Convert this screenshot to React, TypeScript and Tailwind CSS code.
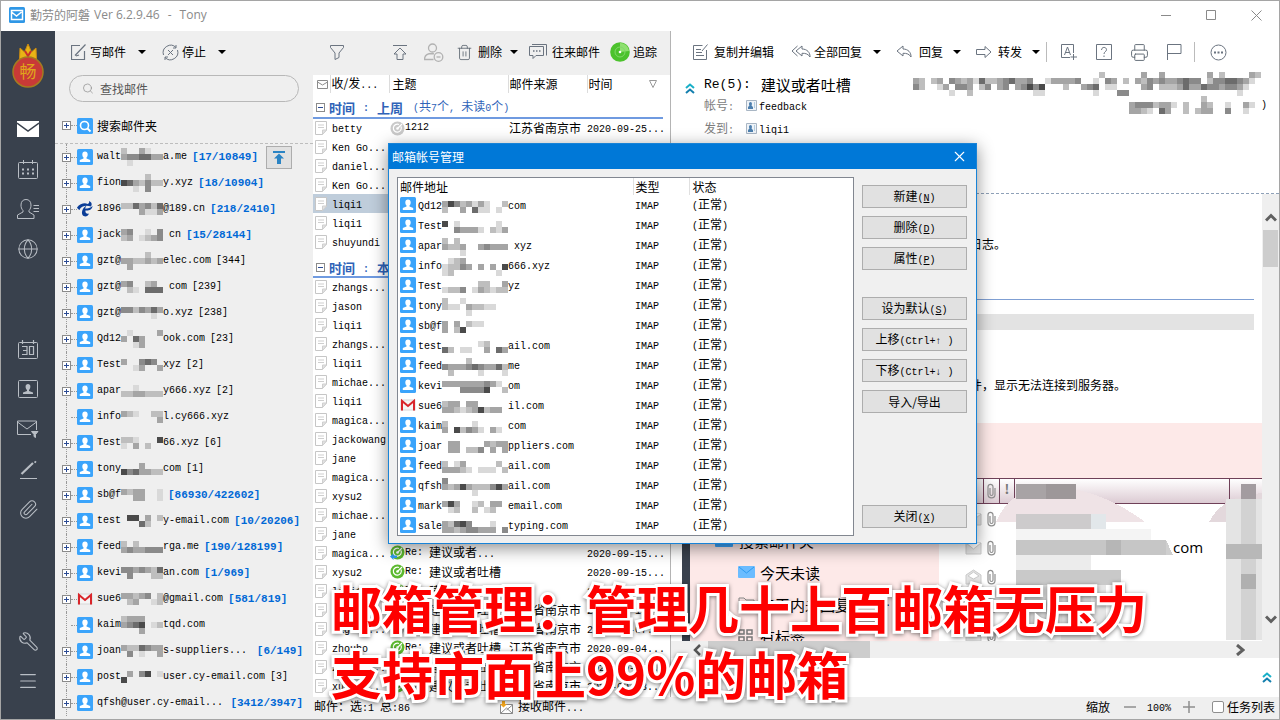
import type { ReactNode } from 'react';
import {
  Globe,
  Menu,
  Paperclip,
  Printer,
  Search,
  Trash2,
  Wrench,
  X,
} from 'lucide-react';

const accounts = [
  { head: 'walt', tail: 'a.me', mosaic: ['2..31..', '3445533', '.1.....'], count: '[17/10849]', unread: true, upload: true },
  { head: 'fion', tail: 'y.xyz', mosaic: ['....2..', '6532422', '..1.4..'], count: '[18/10904]', unread: true },
  { head: '1896', tail: '@189.cn', mosaic: ['2253425', '...3113'], count: '[218/2410]', unread: true, icon: 'telecom' },
  { head: 'jack', tail: ' cn', mosaic: ['34..1.4', '23.1234'], count: '[15/28144]', unread: true },
  { head: 'gzt@', tail: 'elec.com', mosaic: ['....2..', '3322323', '.3.....'], count: '[344]' },
  { head: 'gzt@', tail: ' com', mosaic: ['34..23.', '.21.555'], count: '[239]' },
  { head: 'gzt@', tail: 'o.xyz', mosaic: ['4424353', '.....1.'], count: '[238]' },
  { head: 'Qd12', tail: 'ook.com', mosaic: ['.1....3', '3.53...', '..13...'], count: '[23]' },
  { head: 'Test', tail: 'xyz', mosaic: ['3..454.', '..13..3'], count: '[2]' },
  { head: 'apar', tail: 'y666.xyz', mosaic: ['..1....', '2233222'], count: '[2]' },
  { head: 'info', tail: 'l.cy666.xyz', mosaic: ['321..22', '......3'], leaf: true },
  { head: 'Test', tail: '66.xyz', mosaic: ['221...6', '1.3.2..'], count: '[6]' },
  { head: 'tony', tail: 'com', mosaic: ['...3...', '6453322'], count: '[1]' },
  { head: 'sb@f', tail: '', mosaic: ['3233..1', '..33..1'], count: '[86930/422602]', unread: true },
  { head: 'test', tail: 'y-email.com', mosaic: ['.66.3.2', '...52..'], count: '[10/20206]', unread: true },
  { head: 'feed', tail: 'rga.me', mosaic: ['2.2....', '3433444'], count: '[190/128199]', unread: true },
  { head: 'kevi', tail: 'an.com', mosaic: ['4434325', '.4...22'], count: '[1/969]', unread: true },
  { head: 'sue6', tail: '@gmail.com', mosaic: ['33234.2', '.23..12'], count: '[581/819]', unread: true, icon: 'gmail' },
  { head: 'kaim', tail: 'tqd.com', mosaic: ['2333...', '3456.12', '...3...'], leaf: true },
  { head: 'joan', tail: 's-suppliers...', mosaic: ['3225433', '.4.1..3'], count: '[6/149]', unread: true, right: true },
  { head: 'post', tail: 'user.cy-email.com', mosaic: ['.3.46.1', '6......'], count: '[3]' },
  { head: 'qfsh@user.cy-email...', tail: '', count: '[3412/3947]', unread: true, right: true },
];

const mailboxes = [
  { head: 'Qd12', tail: 'com', mosaic: ['36423131..2', '2..3.511.1.'] },
  { head: 'Test', tail: '', mosaic: ['6.1......1.', '..43331.213'] },
  { head: 'apar', tail: ' xyz', mosaic: ['2.2........', '3223..34333', '...1.......'] },
  { head: 'info', tail: '666.xyz', mosaic: ['.123.......', '12243.3.3.6', '12.......1.'] },
  { head: 'Test', tail: 'yz', mosaic: ['......22..3', '1224.132122'] },
  { head: 'tony', tail: '', mosaic: ['2..1.......', '211.32211..', '....1.....'] },
  { head: 'sb@f', tail: '', mosaic: ['3.3.211....', '3.26.......'] },
  { head: 'test', tail: 'ail.com', mosaic: ['......12...', '52.11..3.53'] },
  { head: 'feed', tail: 'me', mosaic: ['....2......', '43334543352', '.2....1...1'] },
  { head: 'kevi', tail: 'om', mosaic: ['3333333431.', '...44446..2'] },
  { head: 'sue6', tail: 'il.com', mosaic: ['233.33.....', '3321236233.'], icon: 'gmail' },
  { head: 'kaim', tail: 'com', mosaic: ['2....1.....', '3.62431.31.'] },
  { head: 'joar', tail: 'ppliers.com', mosaic: ['.33....3233', '.33.224.3.3'] },
  { head: 'feed', tail: 'ail.com', mosaic: ['2.13.....2.', '33321.111.2'] },
  { head: 'qfsh', tail: 'ail.com', mosaic: ['4..........', '32363222463', '.....1.....'] },
  { head: 'mark', tail: 'email.com', mosaic: ['363..12.33.', '.12..2.12..'] },
  { head: 'sale', tail: 'typing.com', mosaic: ['32564...1..', '332344333.4'] },
];

type MailRow = {
  from: string;
  subject?: string;
  more?: boolean;
  source?: boolean;
  date?: string;
  icon?: string;
  selected?: boolean;
};

const lastWeek: MailRow[] = [
  { from: 'betty', subject: '1212', source: true, date: '2020-09-25...', icon: 'gray' },
  { from: 'Ken Go...' },
  { from: 'daniel...' },
  { from: 'Ken Go...' },
  { from: 'liqi1', selected: true },
  { from: 'liqi1' },
  { from: 'shuyundi' },
];

const thisMonth: MailRow[] = [
  { from: 'zhangs...' },
  { from: 'jason' },
  { from: 'liqi1' },
  { from: 'zhangs...' },
  { from: 'liqi1' },
  { from: 'michae...' },
  { from: 'liqi1' },
  { from: 'magica...' },
  { from: 'jackowang' },
  { from: 'jane' },
  { from: 'magica...' },
  { from: 'xysu2' },
  { from: 'michae...' },
  { from: 'jane' },
  { from: 'magica...', subject: 'Re:', more: true, date: '2020-09-15...', icon: 'replied' },
  { from: 'xysu2', subject: 'Re:', date: '2020-09-15...', icon: 'green' },
  { from: 'liqi1', subject: 'Re:', date: '2020-09-14...', icon: 'green' },
  { from: 'jane', subject: 'Re:', source: true, date: '2020-09-10...', icon: 'green' },
  { from: 'magica...', subject: 'Re:', source: true, date: '2020-09-07...', icon: 'gray' },
  { from: 'zhoubo', subject: 'Re:', source: true, date: '2020-09-04...', icon: 'green' },
  { from: 'zhangs...', subject: 'Re:', source: true, date: '2020-09-04...', icon: 'green' },
  { from: 'xuwei...', subject: 'Re:', source: true, date: '2020-09-03...', icon: 'green' },
];

const shades = ['#ffffff', '#d9d9d9', '#bebebe', '#a5a5a5', '#8a8a8a', '#6c6c6c', '#4a4a4a'];

const Mosaic = ({ rows, cell = 6 }: { rows: string[]; cell?: number }) => {
  const cols = Math.max(...rows.map((r) => r.length));
  return (
    <svg
      width={cols * cell}
      height={rows.length * cell}
      shapeRendering="crispEdges"
      className="shrink-0"
      aria-hidden="true"
    >
      {rows.flatMap((row, y) =>
        [...row].map((c, x) =>
          c === '.' ? null : (
            <rect key={`${x}-${y}`} x={x * cell} y={y * cell} width={cell} height={cell} fill={shades[Number(c)]} />
          ),
        ),
      )}
    </svg>
  );
};

const Latin = ({ children }: { children: ReactNode }) => (
  <span className="font-['Liberation_Mono',monospace] text-[10px] whitespace-pre">{children}</span>
);

const Caret = () => (
  <svg width="8" height="4" className="shrink-0">
    <path d="M0 0h8L4 4z" fill="#000" />
  </svg>
);

const AccountIcon = ({ kind }: { kind?: string }) => {
  if (kind === 'gmail') {
    return (
      <svg width="16" height="16" viewBox="0 0 16 16" className="shrink-0">
        <rect x="1" y="3" width="14" height="10" fill="#f5f5f5" stroke="#d8d8d8" />
        <path d="M2 13.500V4l6 5 6-5v9.500" fill="none" stroke="#d9252a" strokeWidth="2" />
      </svg>
    );
  }
  if (kind === 'telecom') {
    return (
      <svg width="16" height="16" viewBox="0 0 16 16" className="shrink-0" fill="#0b3d97">
        <path d="M0 6.500C3 2.500 8 1.500 10.500 3C12 2.500 12.500 1.500 12 0C14.500 1 15.500 3 14 5.500C10 4 4 4.500 2.500 9C1.500 8.500.5 7.500 0 6.500z" />
        <path d="M9.500 4.500C5.500 7 4 11 5.500 14C7.500 16.500 11 15.500 12 12.500C9.500 13.500 8 11.500 8.500 9.500C11.500 10 15.500 8.500 15.500 5C13.500 7 11 7.500 8 7.500C8.500 6.500 9 5.500 9.500 4.500z" />
      </svg>
    );
  }
  return (
    <svg width="16" height="16" viewBox="0 0 16 16" className="shrink-0">
      <rect width="16" height="16" rx="1.500" fill="#3ba4fb" />
      <path d="M8 2.500c1.700 0 2.700 1.200 2.700 2.900 0 1.500-.7 2.500-1.200 3v1.100l3.700 1.600v1.900H2.800v-1.900l3.700-1.600V8.400c-.5-.5-1.200-1.500-1.200-3 0-1.700 1-2.900 2.700-2.900z" fill="#fff" />
    </svg>
  );
};

const ExpandBox = ({ open }: { open?: boolean }) => (
  <svg width="9" height="9" className="shrink-0">
    <rect x=".5" y=".5" width="8" height="8" fill="#fff" stroke="#8b8b8b" />
    <path d={open ? 'M2 4.500h5' : 'M2 4.500h5M4.500 2v5'} stroke="#2b4b94" />
  </svg>
);

const NoteIcon = () => (
  <svg width="12" height="14" viewBox="0 0 12 14" className="shrink-0">
    <path d="M.5.500h11v8.500l-4 4.500h-7z" fill="#fff" stroke="#c6c6c6" />
    <path d="M11.500 9h-4v4.500z" fill="#e2e2e2" stroke="#cfcfcf" />
    <path d="M3 4h6M3 6.500h6" stroke="#cfcfcf" />
  </svg>
);

const RadarIcon = ({ kind }: { kind?: string }) => (
  <svg width="15" height="15" viewBox="0 0 15 15" className="shrink-0">
    <circle cx="7.500" cy="7.500" r="7" fill={kind === 'gray' ? '#c9c9c9' : '#5cb92f'} />
    <path d="M11 5.500a4 4 0 1 1-2-2M7.500 7.500L12 3" fill="none" stroke="#fff" strokeWidth="1.200" />
    <circle cx="7.500" cy="7.500" r="1.300" fill="#fff" />
    {kind === 'replied' && <path d="M0 11.500L3.500 8.500v2H7v2.500H3.500v2z" fill="#2f9bf0" />}
  </svg>
);

const ReplyIcon = ({ all }: { all?: boolean }) => (
  <svg width={all ? 20 : 16} height="14" viewBox={all ? '-4 0 20 14' : '0 0 16 14'} className="shrink-0" fill="#fff" stroke="#6b7480">
    {all && <path d="M2.500 1L-3 6l5.500 5" fill="none" />}
    <path d="M7 1L1 6l6 5V8.300c3.500-.2 6.500.8 8 3.700.3-4.500-3-8-8-8z" />
  </svg>
);

const DoubleChevron = () => (
  <svg width="10" height="11" viewBox="0 0 10 11" fill="none" strokeWidth="2" className="shrink-0">
    <path d="M1 5l4-3.500L9 5" stroke="#19b0c8" />
    <path d="M1 10l4-3.500L9 10" stroke="#147fae" />
  </svg>
);

const Envelope = ({ open }: { open?: boolean }) => (
  <svg width="17" height="16" viewBox="0 0 17 16" className="shrink-0" fill="#e3e3e3" stroke="#c9c9c9">
    {open ? <path d="M1 6l7.500-5L16 6v9H1z" /> : <path d="M1 3h15v11H1z" />}
    <path d={open ? 'M3 7l5.500-4L14 7l-5.500 3z' : 'M1 3l7.500 6L16 3'} fill="#fff" />
  </svg>
);

const ClipIcon = () => (
  <svg width="9" height="16" viewBox="0 0 9 16" fill="none" stroke="#8f8f8f" strokeWidth="1.200" className="shrink-0">
    <path d="M3 5v6c0 2 3 2 3 0V4C6 .5 1 .5 1 4v7.500c0 4.500 7 4.500 7 0V5" />
  </svg>
);

const SidebarButton = ({ label, children }: { label: string; children: ReactNode }) => (
  <button aria-label={label} className="flex h-10 w-full items-center justify-center text-[#b9bec5]">
    {children}
  </button>
);

const Sidebar = () => (
  <nav className="flex w-[54px] shrink-0 flex-col bg-[#39414d]">
    <div className="flex h-[78px] items-center justify-center pb-2">
      <svg width="34" height="46" viewBox="0 0 34 46">
        <path d="M8.500 16L9 5l4.500 4L17 1l3.500 8L25 5l.5 11z" fill="#e9b416" stroke="#c98a12" />
        <path d="M14 8l3 5 3-5" fill="none" stroke="#c8302c" strokeWidth="2" />
        <circle cx="17" cy="29" r="15" fill="#c83a37" stroke="#a57b20" strokeWidth="1.500" />
        <text x="17" y="35" textAnchor="middle" fontSize="17" fill="#e0a51b" fontFamily="'Noto Sans CJK SC', sans-serif">
          畅
        </text>
      </svg>
    </div>
    <SidebarButton label="邮件">
      <svg width="22" height="16" viewBox="0 0 22 16">
        <path d="M0 0h22v16H0z" fill="#fff" />
        <path d="M0 2l11 8 11-8" fill="none" stroke="#39414d" strokeWidth="1.500" />
      </svg>
    </SidebarButton>
    <SidebarButton label="日程">
      <svg width="20" height="19" viewBox="0 0 20 19" fill="none" stroke="currentColor">
        <rect x=".5" y="2.500" width="19" height="16" rx="1" />
        <path d="M5.500 0v4M14.500 0v4" />
        <path d="M4 9.500h2M9 9.500h2M14 9.500h2M4 13.500h2M9 13.500h2M14 13.500h2" strokeWidth="2" />
      </svg>
    </SidebarButton>
    <SidebarButton label="联系人">
      <svg width="22" height="20" viewBox="0 0 22 20" fill="none" stroke="currentColor">
        <path d="M6 11.500C4.500 10 4 8 4 6c0-3.500 2-5.500 5-5.500S14 2.500 14 6c0 2-.5 4-2 5.500v1.500l5 3v3.500H.5V16l5.500-3z" />
        <path d="M16.500 6.500H22M16.500 9.500H22M16.500 12.500H22" />
      </svg>
    </SidebarButton>
    <SidebarButton label="网络">
      <Globe size={22} strokeWidth={1.1} />
    </SidebarButton>
    <div className="h-[60px]" />
    <SidebarButton label="日历">
      <svg width="20" height="19" viewBox="0 0 20 19" fill="none" stroke="currentColor">
        <rect x=".5" y="2.500" width="19" height="16" rx="1" />
        <path d="M4.500 0v4M15.500 0v4M4 6.500h5v8H4M5 10.500h4M11.500 6.500h4v8h-4z" strokeWidth="1.200" />
      </svg>
    </SidebarButton>
    <SidebarButton label="名片">
      <svg width="20" height="18" viewBox="0 0 20 18">
        <rect x=".5" y=".5" width="19" height="17" rx="1" fill="none" stroke="currentColor" />
        <path d="M10 4c3 0 3 4 1 6v1l4 1.500V14H5v-1.500L9 11v-1C7 8 7 4 10 4z" fill="currentColor" />
      </svg>
    </SidebarButton>
    <SidebarButton label="过滤邮件">
      <svg width="22" height="18" viewBox="0 0 22 18" fill="none" stroke="currentColor">
        <path d="M14 14.500H.5V1h19v9M.5 2l9.500 7 9.500-7" />
        <path d="M14.500 11.500h6.500l-2.500 3v3l-1.500-1v-2z" fill="currentColor" />
      </svg>
    </SidebarButton>
    <SidebarButton label="签名">
      <svg width="19" height="19" viewBox="0 0 19 19" fill="none" stroke="currentColor">
        <path d="M2.500 14L14 3" strokeWidth="2.200" />
        <path d="M15.500 1.500l1.500 1" strokeWidth="2" />
        <path d="M1 18.500h17" />
      </svg>
    </SidebarButton>
    <SidebarButton label="附件">
      <Paperclip size={21} strokeWidth={1.2} />
    </SidebarButton>
    <div className="flex-1" />
    <SidebarButton label="设置">
      <Wrench size={21} strokeWidth={1.2} className="-scale-x-100" />
    </SidebarButton>
    <SidebarButton label="菜单">
      <Menu size={22} strokeWidth={1.2} />
    </SidebarButton>
    <div className="h-[18px]" />
  </nav>
);

const FolderTree = () => (
  <section className="flex w-[258px] shrink-0 flex-col">
    <div className="flex h-11 shrink-0 items-center pb-0.5 pl-4">
      <button className="flex items-center gap-1">
        <svg width="15" height="16" viewBox="0 0 15 16" fill="none" stroke="#6b7480">
          <path d="M9 1.500H.5v14h13V7M4 11.500L14.500.5M5 12l3-1" strokeWidth="1.200" />
        </svg>
        写邮件
      </button>
      <div className="w-3" />
      <Caret />
      <button className="ml-4 flex items-center gap-[3px]">
        <svg width="17" height="17" viewBox="0 0 17 17" fill="none" stroke="#6b7480">
          <path d="M1.500 11A7.500 7.500 0 0 1 14 3.500M15.500 6A7.500 7.500 0 0 1 3 13.500M14 1v3h-3M3 16v-3h3M6 6l5 5M11 6l-5 5" />
        </svg>
        停止
      </button>
      <div className="w-3" />
      <Caret />
    </div>
    <label className="mx-[14px] flex h-[27px] shrink-0 items-center gap-1.5 rounded-full border border-[#b8b8b8] pl-3">
      <Search size={13} strokeWidth={1.5} className="text-[#909090]" />
      <input
        aria-label="查找邮件"
        placeholder="查找邮件"
        className="w-full bg-transparent text-[12px] outline-none placeholder:text-[#555]"
      />
    </label>
    <div className="flex h-[42px] shrink-0 items-center border-b border-dashed border-[#bdbdbd] pt-1.5 pl-[7px]">
      <ExpandBox />
      <span className="w-1.5 border-t border-dotted border-[#999]" />
      <svg width="16" height="16" viewBox="0 0 16 16">
        <rect width="16" height="16" rx="1.500" fill="#3ba4fb" />
        <circle cx="7.500" cy="7.500" r="4" fill="none" stroke="#fff" strokeWidth="1.600" />
        <path d="M10.500 10.500l3 3" stroke="#fff" strokeWidth="1.800" />
      </svg>
      <span className="ml-1">搜索邮件夹</span>
    </div>
    <ul className="min-h-0 flex-1 overflow-hidden">
      {accounts.map((a, i) => (
        <li key={i} className="relative flex h-[26px] items-center pr-[10px] pl-[7px] leading-none whitespace-nowrap">
          <span className="absolute inset-y-0 left-[11px] border-l border-dotted border-[#999]" />
          <span className="relative flex w-[15px] items-center">
            {a.leaf ? <span className="w-[9px]" /> : <ExpandBox />}
            <span className="flex-1 border-t border-dotted border-[#999]" />
          </span>
          <AccountIcon kind={a.icon} />
          <span className="ml-1 flex items-center">
            <Latin>{a.head}</Latin>
            {a.mosaic && <Mosaic rows={a.mosaic} />}
            <Latin>{a.tail}</Latin>
          </span>
          {a.count && (
            <span
              className={
                a.unread
                  ? `font-['Liberation_Mono',monospace] text-[11px] font-bold text-[#0068d6] ${a.right ? 'ml-auto' : 'ml-[5px]'}`
                  : "ml-[5px] font-['Liberation_Mono',monospace] text-[10px]"
              }
            >
              {a.count}
            </span>
          )}
          {a.upload && (
            <button aria-label="置顶" className="mr-[11px] ml-auto flex h-[23px] w-[26px] items-center justify-center border border-[#adadad] bg-[#e1e1e1]">
              <svg width="12" height="13" viewBox="0 0 12 13">
                <path d="M0 0h12v2H0zM6 2.500l5 5H8V13H4V7.500H1z" fill="#2b84c4" />
              </svg>
            </button>
          )}
        </li>
      ))}
    </ul>
  </section>
);

const MailLine = ({ row }: { row: MailRow }) => (
  <tr className={row.selected ? 'bg-[#bfcddb]' : ''}>
    <td className="h-[19px] p-0 pl-[2px]"><NoteIcon /></td>
    <td className="p-0 pl-[2px]"><Latin>{row.from}</Latin></td>
    <td className="overflow-hidden p-0 pl-px">
      {row.subject && (
        <div className="flex items-center">
          <RadarIcon kind={row.icon} />
          <Latin>{row.subject}</Latin>
          {row.subject === 'Re:' && (
            <span className="ml-1.5">{row.more ? <>建议或者<Latin>...</Latin></> : '建议或者吐槽'}</span>
          )}
        </div>
      )}
    </td>
    <td className="p-0 pl-px">{row.source && '江苏省南京市'}</td>
    <td className="p-0"><Latin>{row.date}</Latin></td>
  </tr>
);

const MailList = () => (
  <section className="flex w-[357px] shrink-0 flex-col">
    <div className="flex h-11 shrink-0 items-center pb-0.5 pl-[17px]">
      <button aria-label="筛选">
        <svg width="14" height="15" viewBox="0 0 14 15" fill="none" stroke="#6b7480">
          <path d="M.5.500h13v2L9 8v4.500L5 14.500V8L.5 2.500z" />
        </svg>
      </button>
      <button aria-label="上移" className="ml-[49px]">
        <svg width="14" height="15" viewBox="0 0 14 15" fill="none" stroke="#6b7480">
          <path d="M0 .5h14M7 3L1 9h3v5.500h6V9h3z" />
        </svg>
      </button>
      <button aria-label="移除联系人" className="ml-[17px]">
        <svg width="20" height="19" viewBox="0 0 20 19" fill="none" stroke="#b2b2b2" strokeWidth="1.300">
          <circle cx="8.500" cy="5" r="4" />
          <path d="M9.500 16.500H.5C.5 13 3 10.500 8 10.500l2 .3" />
          <circle cx="14.500" cy="14" r="4.300" />
          <path d="M12.500 14h4" />
        </svg>
      </button>
      <button className="ml-3 flex items-center gap-[5px]">
        <Trash2 size={17} strokeWidth={1.2} className="text-[#5f6873]" />
        删除
      </button>
      <div className="w-2" />
      <Caret />
      <button className="ml-[11px] flex items-center gap-[5px]">
        <svg width="18" height="16" viewBox="0 0 18 16" fill="none" stroke="#6b7480">
          <path d="M3 .5h14.500v11M.5 2.500h14v9H7l-3 3v-3H.5z" />
          <path d="M4 7h1.500M7 7h1.500M10 7h1.500" strokeWidth="1.600" />
        </svg>
        往来邮件
      </button>
      <button className="ml-2.5 flex items-center gap-[3px]">
        <svg width="20" height="20" viewBox="0 0 20 20">
          <circle cx="10" cy="10" r="9.800" fill="#4cc22d" />
          <path d="M10 10V1a9 9 0 0 1 9 8z" fill="#8fe070" />
          <circle cx="10" cy="10" r="5" fill="none" stroke="#7fd968" />
          <circle cx="10" cy="10" r="1.300" fill="#fff" />
        </svg>
        追踪
      </button>
    </div>
    <div className="min-h-0 flex-1 overflow-hidden bg-white">
      <table className="w-[350px] table-fixed border-collapse text-left leading-none whitespace-nowrap">
        <colgroup>
          <col className="w-[17px]" />
          <col className="w-[59px]" />
          <col className="w-[119px]" />
          <col className="w-[79px]" />
          <col className="w-[76px]" />
        </colgroup>
        <thead>
          <tr>
            <th className="h-[18px] border-r border-[#dcdcdc] p-0 pl-1">
              <svg width="11" height="9" viewBox="0 0 11 9" fill="none" stroke="#8c8c8c">
                <path d="M.5.500h10v8H.5zM.5 2l5 3 5-3" />
              </svg>
            </th>
            <th className="border-r border-[#dcdcdc] p-0 pl-px font-normal">收/发<Latin>...</Latin></th>
            <th className="border-r border-[#dcdcdc] p-0 pl-[3px] font-normal">主题</th>
            <th className="border-r border-[#dcdcdc] p-0 pl-px font-normal">邮件来源</th>
            <th className="p-0 pl-px font-normal">
              <span className="flex items-center justify-between pr-1.5">
                时间
                <svg width="8" height="8" viewBox="0 0 8 8" fill="none" stroke="#999">
                  <path d="M.5.500h7L4 7.500z" />
                </svg>
              </span>
            </th>
          </tr>
        </thead>
        <tbody>
          <tr>
            <td colSpan={5} className="h-[25px] border-b-2 border-[#6f9ae0] p-0 pt-1 pl-[3px] text-[#2f63b8]">
              <div className="flex items-center">
                <ExpandBox open />
                <b className="ml-1 text-[13px]">时间</b>
                <b className="ml-2"><Latin>:</Latin></b>
                <b className="ml-2 text-[13px]">上周</b>
                <span className="ml-2.5"><Latin>(</Latin>共<Latin>7</Latin>个<Latin>, </Latin>未读<Latin>0</Latin>个<Latin>)</Latin></span>
              </div>
            </td>
          </tr>
          {lastWeek.map((row, i) => (
            <MailLine key={i} row={row} />
          ))}
          <tr>
            <td colSpan={5} className="h-[26px] border-b-2 border-[#6f9ae0] p-0 pt-2 pl-[3px] text-[#2f63b8]">
              <div className="flex items-center">
                <ExpandBox open />
                <b className="ml-1 text-[13px]">时间</b>
                <b className="ml-2"><Latin>:</Latin></b>
                <b className="ml-2 text-[13px]">本月</b>
              </div>
            </td>
          </tr>
          {thisMonth.map((row, i) => (
            <MailLine key={i} row={row} />
          ))}
        </tbody>
      </table>
    </div>
  </section>
);

const ContactBadge = () => (
  <svg width="11" height="11" viewBox="0 0 11 11">
    <path d="M.5.500h10v10H.5z" fill="#eef3f8" stroke="#a9b6c4" />
    <path d="M4.500 2c2 0 1.500 3 1 3.500L7 7v2H2V7l1.500-1.500C3 5 2.500 2 4.500 2z" fill="#4d7fae" />
    <path d="M8.500 2.500v6" stroke="#7aa6c9" strokeDasharray="1 1" />
  </svg>
);

const ReaderToolbar = () => (
  <div className="flex h-11 shrink-0 items-center pb-0.5 pl-[22px]">
    <button className="flex items-center gap-1.5">
      <svg width="15" height="16" viewBox="0 0 15 16" fill="none" stroke="#6b7480">
        <path d="M9.500 1.500H.5v14h13V6M3 5.500h5M3 8.500h6M3 11.500h8M9 7l5.500-6.500" />
      </svg>
      复制并编辑
    </button>
    <button className="ml-[17px] flex items-center gap-[3px]">
      <ReplyIcon all />
      全部回复
    </button>
    <div className="w-[11px]" />
    <Caret />
    <button className="ml-[15px] flex items-center gap-[7px]">
      <ReplyIcon />
      回复
    </button>
    <div className="w-[10px]" />
    <Caret />
    <button className="ml-[15px] flex items-center gap-[6px]">
      <svg width="16" height="12" viewBox="0 0 16 12" fill="none" stroke="#6b7480">
        <path d="M.5 3.500H9V.5L15 6l-6 5.500v-3H.5z" />
      </svg>
      转发
    </button>
    <div className="w-[10px]" />
    <Caret />
    <div className="ml-[6px] h-5 w-px bg-[#bbb]" />
    <button aria-label="字体" className="ml-[14px]">
      <svg width="17" height="16" viewBox="0 0 17 16" fill="none" stroke="#6b7480">
        <path d="M9 13.500H.5v-13h12V9M12.500 10v6M9.500 13h6.500M3.500 11l3-8 3 8M4.500 8.500h4" />
      </svg>
    </button>
    <button aria-label="帮助" className="ml-[18px]">
      <svg width="16" height="16" viewBox="0 0 16 16" fill="none" stroke="#6b7480">
        <path d="M.5.500h15v15H.5zM5.500 6c0-3.500 5-3.300 5-.3 0 2-2.500 2-2.500 4.300M8 11.500v1.500" />
      </svg>
    </button>
    <button aria-label="打印" className="ml-[18px]">
      <Printer size={19} strokeWidth={1.2} className="text-[#5f6873]" />
    </button>
    <button aria-label="标记" className="ml-[18px]">
      <svg width="15" height="16" viewBox="0 0 15 16" fill="none" stroke="#6b7480">
        <path d="M.5 16V.5h13.500v9H.5" />
      </svg>
    </button>
    <div className="ml-[12px] h-5 w-px bg-[#bbb]" />
    <button aria-label="更多" className="ml-[15px]">
      <svg width="17" height="17" viewBox="0 0 17 17" fill="none" stroke="#6b7480">
        <circle cx="8.500" cy="8.500" r="7.500" />
        <path d="M4 8.500h2M7.500 8.500h2M11 8.500h2" strokeWidth="2" />
      </svg>
    </button>
  </div>
);

// Nested client window shown inside the message body
const EmbeddedShot = () => (
  <div className="flex min-h-0 flex-1 overflow-hidden">
    <div className="w-[11px] shrink-0" />
    <div className="w-2 shrink-0 bg-[#39414d]" />
    <div className="flex w-[249px] shrink-0 flex-col bg-[#fde9e8] pt-[101px] text-[15px] leading-none whitespace-nowrap">
      <div className="flex h-8 shrink-0 items-center pl-[25px]">
        <svg width="18" height="14" className="mr-1.5">
          <rect width="18" height="14" rx="1" fill="#3ba4fb" />
        </svg>
        搜索邮件夹
      </div>
      <div className="flex h-8 shrink-0 items-center gap-[5px] pl-12">
        <svg width="17" height="12" viewBox="0 0 17 12">
          <rect width="17" height="12" rx="1" fill="#6bbcff" />
          <path d="M1 1l7.500 6L16 1" fill="none" stroke="#2f9bf0" />
        </svg>
        今天未读
      </div>
      <div className="flex h-8 shrink-0 items-center gap-[5px] pl-12">
        <svg width="17" height="14" viewBox="0 0 17 14" fill="none" stroke="#888">
          <path d="M1 1h5l2 2h8v10H1z" />
        </svg>
        三天内未回复<Latin>......</Latin>
      </div>
      <div className="flex h-8 shrink-0 items-center gap-[7px] pl-12">
        <svg width="15" height="14" viewBox="0 0 15 14" fill="none" stroke="#777" strokeWidth="1.500">
          <path d="M1 1h5v4H1zM9 1h5v4H9zM1 8h5v4H1zM9 8h5v4H9z" />
        </svg>
        有标签
      </div>
    </div>
    <div className="relative flex min-w-0 flex-1 flex-col">
      <div className="h-[55px] shrink-0 bg-[#fde9e8]" />
      <div className="flex h-[26px] shrink-0 border-y border-[#6f4058] bg-gradient-to-b from-white to-[#dccbd3] pl-[27px]">
        <span className="w-[18px] border-r border-[#6f4058]" />
        <span className="flex w-4 items-center justify-center border-r border-[#6f4058]">
          <ClipIcon />
        </span>
        <span className="w-[15px] border-r border-[#6f4058] text-center text-[13px] font-bold text-[#777]">!</span>
        <span className="flex-1 border-r border-[#6f4058]" />
        <span className="w-8" />
      </div>
      {[0, 1, 2, 3, 4].map((i) => (
        <div key={i} className="flex h-[29px] shrink-0 items-center gap-[5px] pl-[26px]">
          <Envelope open={i === 2} />
          <ClipIcon />
          {i === 1 && <span className="ml-[172px] font-['Open_Sans',sans-serif] text-[15px]">com</span>}
        </div>
      ))}
      <svg width="100%" height="217" className="absolute inset-x-0 top-0" shapeRendering="crispEdges" aria-hidden="true">
        <path d="M57 99C66 78 80 66 110 64C150 63 188 85 206 99z" fill="#efe3e6" />
        <path d="M270 99C280 80 296 72 323 70v29z" fill="#e3d8dc" />
        <rect x="77" y="61" width="60" height="15" fill="#a8a3a5" />
        <rect x="107" y="61" width="30" height="15" fill="#9d9799" />
        <rect x="77" y="91" width="75" height="15" fill="#cdcbcc" />
        <rect x="152" y="91" width="15" height="15" fill="#e2e7ea" />
        <path d="M77 106h135v15H77z" fill="#f4f4f4" />
        <rect x="77" y="117" width="150" height="15" fill="#c6c6c6" />
        <rect x="167" y="117" width="15" height="15" fill="#b6b6b6" />
        <path d="M227 117l7 15h-7z" fill="#cfcfcf" />
        <rect x="77" y="132" width="75" height="15" fill="#ececec" />
        <rect x="77" y="147" width="105" height="15" fill="#c9c9c9" />
        <rect x="77" y="162" width="90" height="55" fill="#e6e6e6" />
        <rect x="122" y="162" width="30" height="55" fill="#dadada" />
        <rect x="287" y="76" width="36" height="141" fill="#e4e4e4" />
        <rect x="302" y="76" width="15" height="141" fill="#d2d2d2" />
        <rect x="287" y="121" width="36" height="15" fill="#b8b8b8" />
        <rect x="302" y="151" width="15" height="15" fill="#b0b0b0" />
        <rect x="302" y="61" width="15" height="15" fill="#a39ca0" />
      </svg>
    </div>
  </div>
);

const Reader = () => (
  <section className="flex min-w-0 flex-1 flex-col border-l border-[#b4b4b4] bg-white">
    <ReaderToolbar />
    <header className="flex h-[119px] shrink-0 border-b border-dashed border-[#8fa1b8] pl-[14px]">
      <div className="pt-2"><DoubleChevron /></div>
      <div className="ml-[9px] flex-1">
        <h1 className="flex h-[18px] items-center text-[15px] leading-none whitespace-nowrap">
          <span className="mr-2.5 font-['Liberation_Mono',monospace] text-[13px]">Re(5):</span>
          建议或者吐槽
        </h1>
        <p className="flex h-6 items-center">
          <span className="w-[42px] text-[#7d7d7d]">帐号<Latin>:</Latin></span>
          <ContactBadge />
          <span className="ml-0.5"><Latin>feedback</Latin></span>
        </p>
        <p className="flex h-[22px] items-center">
          <span className="w-[42px] text-[#7d7d7d]">发到<Latin>:</Latin></span>
          <ContactBadge />
          <span className="ml-0.5"><Latin>liqi1</Latin></span>
        </p>
      </div>
      <div className="-mt-[3px] flex flex-col items-end pr-3">
        <Mosaic
          rows={[
            '...............................2......3..3.......3.2....32.',
            '32.23.43231522345334..133334..1.43.2.32434334544.24455431..',
            '42..13.443.24.34.34646...2..345.11....34.222353354434431...',
            '......1..2..........11........1...44..................1....',
          ]}
        />
        <div className="flex items-center">
          <Mosaic rows={['............2.........', '34442331.2..32..1..31.', '3321.53..2.233..4..1..']} />
          <Latin>)</Latin>
        </div>
      </div>
    </header>
    <div className="flex min-h-0 flex-1">
      <article className="flex min-w-0 flex-1 flex-col">
        <p className="h-[105px] shrink-0 pt-[41px] pl-[299px]">日志。</p>
        <hr className="mr-2 border-[#7f9fd3]" />
        <div className="mt-3.5 mr-2 h-4 shrink-0 bg-[#e3e3e3]" />
        <p className="h-[93px] shrink-0 pt-[46px] pl-[299px]">件，显示无法连接到服务器。</p>
        <EmbeddedShot />
        <div className="flex h-[17px] shrink-0 items-center bg-[#efefef] pl-[22px]">
          <svg width="8" height="12" viewBox="0 0 8 12" fill="none" stroke="#555" strokeWidth="2.500">
            <path d="M7 1L2 6l5 5" />
          </svg>
          <div className="ml-[7px] h-full w-[162px] bg-[#cdcdcd]" />
          <svg width="9" height="12" viewBox="0 0 9 12" fill="none" stroke="#606060" strokeWidth="3" className="mr-[17px] ml-auto">
            <path d="M1 1l6 5-6 5" />
          </svg>
        </div>
      </article>
      <div className="flex w-[17px] shrink-0 flex-col items-center bg-[#efefef] pt-[19px]">
        <svg width="12" height="9" viewBox="0 0 12 9" fill="none" stroke="#606060" strokeWidth="3">
          <path d="M1 7.500l5-5 5 5" />
        </svg>
        <div className="mt-2 h-[37px] w-[15px] bg-[#cdcdcd]" />
        <svg width="12" height="9" viewBox="0 0 12 9" fill="none" stroke="#606060" strokeWidth="3" className="mt-auto mb-[34px]">
          <path d="M1 1.500l5 5 5-5" />
        </svg>
      </div>
    </div>
    <div className="flex h-[39px] shrink-0 items-center justify-end pr-[7px]">
      <DoubleChevron />
    </div>
  </section>
);

const StatusBar = () => (
  <footer className="flex h-[22px] shrink-0 items-center pb-0.5 leading-none whitespace-nowrap">
    <span className="w-[187px] pl-px">邮件：选<Latin>:1 </Latin>总<Latin>:86</Latin></span>
    <svg width="13" height="13" viewBox="0 0 13 13">
      <path d="M.5 3.500h12v9H.5z" fill="#fff" stroke="#888" />
      <path d="M.5 12.500L6.500 7l6 5.500M12.500 4L6.500 9" fill="none" stroke="#888" />
      <path d="M2 0h3v3h2L3.500 6.500 0 3h2z" fill="#f0a41c" />
    </svg>
    <span className="ml-[5px]">接收邮件<Latin>...</Latin></span>
    <span className="ml-auto">缩放</span>
    <button aria-label="缩小" className="ml-[14px]">
      <svg width="12" height="12"><path d="M0 6h12" stroke="#8f8f8f" strokeWidth="1.500" /></svg>
    </button>
    <span className="ml-[11px]"><Latin>100%</Latin></span>
    <button aria-label="放大" className="ml-3">
      <svg width="12" height="12"><path d="M0 6h12M6 0v12" stroke="#8f8f8f" strokeWidth="1.500" /></svg>
    </button>
    <label className="mr-1 ml-[17px] flex items-center gap-[3px]">
      <input type="checkbox" className="h-3 w-3 appearance-none rounded-xs border border-[#8f8f8f] bg-white" />
      任务列表
    </label>
  </footer>
);

const DialogButton = ({ children, className = '' }: { children: ReactNode; className?: string }) => (
  <button className={`h-[23px] w-[105px] border border-[#adadad] bg-[#e1e1e1] leading-none ${className}`}>{children}</button>
);

const AccountDialog = () => (
  <div
    role="dialog"
    aria-label="邮箱帐号管理"
    className="absolute top-[142px] left-[387px] w-[589px] border border-[#1883d7] bg-[#f0f0f0] shadow-[0_4px_16px_rgba(0,0,0,0.45)]"
  >
    <div className="flex h-[25px] items-center justify-between bg-[#0078d7] pr-2 pl-[3px] text-white">
      邮箱帐号管理
      <button aria-label="关闭窗口"><X size={17} strokeWidth={1.5} /></button>
    </div>
    <div className="flex gap-2 pt-2 pr-[9px] pb-[7px] pl-2">
      <div className="flex-1 border border-[#828790] bg-white">
        <table className="w-full table-fixed text-left leading-none whitespace-nowrap">
          <colgroup>
            <col className="w-[235px]" />
            <col className="w-[56px]" />
            <col />
          </colgroup>
          <thead>
            <tr>
              <th className="h-[17px] border-r border-[#e0e0e0] p-0 pl-[2px] font-normal">邮件地址</th>
              <th className="border-r border-[#e0e0e0] p-0 pl-[2px] font-normal">类型</th>
              <th className="p-0 pl-[3px] font-normal">状态</th>
            </tr>
          </thead>
          <tbody>
            {mailboxes.map((m, i) => (
              <tr key={i}>
                <td className="h-5 p-0 pl-[2px]">
                  <div className="flex items-center">
                    <AccountIcon kind={m.icon} />
                    <span className="ml-[2px] flex h-5 items-center pt-1">
                      <Latin>{m.head}</Latin>
                      <Mosaic rows={m.mosaic} />
                      <Latin>{m.tail}</Latin>
                    </span>
                  </div>
                </td>
                <td className="p-0 pl-[2px]"><Latin>IMAP</Latin></td>
                <td className="p-0 pl-[3px]"><Latin>(</Latin>正常<Latin>)</Latin></td>
              </tr>
            ))}
          </tbody>
        </table>
      </div>
      <div className="flex flex-col gap-2 pt-2">
        <DialogButton>新建<Latin>(<u>N</u>)</Latin></DialogButton>
        <DialogButton>删除<Latin>(<u>D</u>)</Latin></DialogButton>
        <DialogButton>属性<Latin>(<u>P</u>)</Latin></DialogButton>
        <DialogButton className="mt-[19px]">设为默认<Latin>(<u>S</u>)</Latin></DialogButton>
        <DialogButton>上移<Latin>(Ctrl+↑ )</Latin></DialogButton>
        <DialogButton>下移<Latin>(Ctrl+↓ )</Latin></DialogButton>
        <DialogButton>导入/导出</DialogButton>
        <DialogButton className="mt-auto mb-2">关闭<Latin>(<u>X</u>)</Latin></DialogButton>
      </div>
    </div>
  </div>
);

export default function App() {
  return (
    <div className="relative flex h-screen w-full flex-col overflow-hidden border border-[#a5a5a5] bg-[#efefef] font-['Noto_Sans_CJK_SC',sans-serif] text-[12px] text-black">
      <div className="flex h-[30px] shrink-0 items-center bg-white pb-0.5 pl-2 text-[#8a8a8a]">
        <svg width="16" height="16" viewBox="0 0 16 16">
          <rect width="16" height="16" rx="1.500" fill="#2f97e6" />
          <path d="M2.500 3.500h11v9h-11zM2.500 5l5 4 5-4" fill="none" stroke="#fff" strokeWidth="1.500" />
        </svg>
        <span className="ml-[5px] flex whitespace-pre">
          勤劳的阿磐
          <span className="ml-1 font-['Open_Sans',sans-serif]">Ver 6.2.9.46</span>
          <span className="mx-2 font-['Open_Sans',sans-serif]">-</span>
          <span className="font-['Open_Sans',sans-serif]">Tony</span>
        </span>
        <div className="mr-[17px] ml-auto flex items-center gap-[35px] text-[#8a8a8a]">
          <button aria-label="最小化"><svg width="10" height="10"><path d="M0 5.500h10" stroke="currentColor" /></svg></button>
          <button aria-label="最大化"><svg width="10" height="10"><path d="M.5.500h9v9h-9z" fill="none" stroke="currentColor" /></svg></button>
          <button aria-label="关闭"><svg width="11" height="11"><path d="M.5.500l10 10M10.500.500l-10 10" stroke="currentColor" /></svg></button>
        </div>
      </div>
      <div className="flex min-h-0 flex-1">
        <Sidebar />
        <FolderTree />
        <main className="flex min-w-0 flex-1 flex-col">
          <div className="flex min-h-0 flex-1">
            <MailList />
            <Reader />
          </div>
          <StatusBar />
        </main>
      </div>
      <AccountDialog />
      <p className="absolute top-[573px] left-[330px] text-[51px] leading-[66px] font-bold whitespace-nowrap text-[#fe0000] drop-shadow-[0_1px_2px_rgba(0,0,0,0.5)] [-webkit-text-stroke:6px_white] [paint-order:stroke_fill]">
        邮箱管理：管理几十上百邮箱无压力
        <br />
        支持市面上99%的邮箱
      </p>
    </div>
  );
}
